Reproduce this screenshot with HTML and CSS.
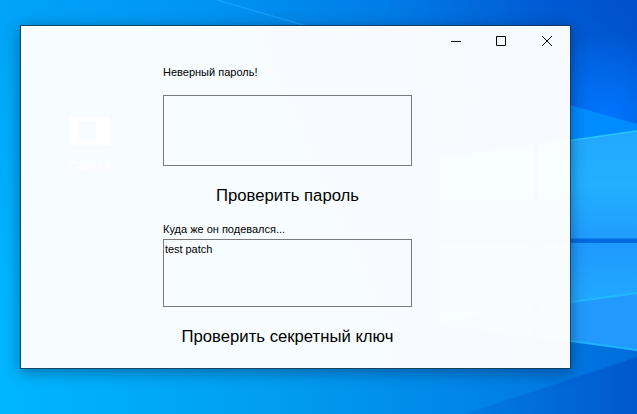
FILE: index.html
```html
<!DOCTYPE html>
<html lang="ru">
<head>
<meta charset="utf-8">
<title>Проверка</title>
<link rel="stylesheet" href="styles.css">
</head>
<body>
<div class="desktop">
  <svg class="wallpaper" viewBox="0 0 637 414" aria-hidden="true">
    <defs>
      <linearGradient id="sky" x1="0" y1="0" x2="1" y2="0">
        <stop offset="0" stop-color="#00a4f8"/>
        <stop offset=".3" stop-color="#0096f3"/>
        <stop offset=".6" stop-color="#007de7"/>
        <stop offset=".85" stop-color="#005bd5"/>
        <stop offset="1" stop-color="#0050cb"/>
      </linearGradient>
      <linearGradient id="floor" x1="0" y1="0" x2="1" y2="0">
        <stop offset="0" stop-color="#00b6ff"/>
        <stop offset=".45" stop-color="#009cf1"/>
        <stop offset=".75" stop-color="#0084e6"/>
        <stop offset="1" stop-color="#006cdd"/>
      </linearGradient>
      <linearGradient id="fade" x1="0" y1="0" x2="0" y2="1">
        <stop offset="0" stop-color="#fff" stop-opacity="0"/>
        <stop offset=".8" stop-color="#fff"/>
      </linearGradient>
      <mask id="lower"><rect width="637" height="414" fill="url(#fade)"/></mask>
      <radialGradient id="glow" gradientUnits="userSpaceOnUse" cx="605" cy="116" r="85">
        <stop offset="0" stop-color="#0075ff"/>
        <stop offset="1" stop-color="#0075ff" stop-opacity="0"/>
      </radialGradient>
      <linearGradient id="upper-pane" x1="0" y1="0" x2="0" y2="1">
        <stop offset="0" stop-color="#22a8ff"/>
        <stop offset=".5" stop-color="#22b0ff"/>
        <stop offset="1" stop-color="#209cff"/>
      </linearGradient>
      <linearGradient id="lower-pane" x1="0" y1="0" x2="0" y2="1">
        <stop offset="0" stop-color="#2099ff"/>
        <stop offset="1" stop-color="#20adff"/>
      </linearGradient>
      <linearGradient id="corner" x1="0" y1="0" x2="1" y2="0">
        <stop offset="0" stop-color="#007de4"/>
        <stop offset="1" stop-color="#0058cc"/>
      </linearGradient>
    </defs>
    <rect width="637" height="414" fill="url(#sky)"/>
    <rect width="637" height="414" fill="url(#floor)" mask="url(#lower)"/>
    <path d="M217 0L410 56" stroke="#1ca6ff" stroke-opacity=".7" stroke-width="1.5"/>
    <rect x="500" y="25" width="137" height="130" fill="url(#glow)"/>
    <path d="M480 78L570 105L637 124V140L440 170Z" fill="#008cff"/>
    <path d="M440 159L637 131V239H440Z" fill="url(#upper-pane)"/>
    <path d="M440 159L637 131" stroke="#27c8ff" stroke-width="1.5"/>
    <path d="M440 238.500H637V242.500H440Z" fill="#006be0"/>
    <path d="M440 243H637V293L440 319Z" fill="url(#lower-pane)"/>
    <path d="M440 320L637 293V350L440 323Z" fill="#2299fc"/>
    <path d="M440 320L637 293" stroke="#20b9ff" stroke-width="2"/>
    <path d="M440 323L637 350" stroke="#20b4ff" stroke-width="2"/>
    <path d="M465 414L637 357V414Z" fill="url(#corner)"/>
    <path d="M536 145V337" stroke="#0075e3" stroke-width="4"/>
  </svg>
  <div class="shortcut">
    <svg class="shortcut-icon" viewBox="0 0 41 29" aria-hidden="true">
      <path fill="#fff" fill-rule="evenodd" d="M0 1H40V29H0ZM9 5V26H26V5Z"/>
      <path d="M2 7H7M2 10H7M2 13H7M28 7H38M28 10H38M28 13H38M28 16H38M28 19H34" stroke="#dce9f2"/>
    </svg>
    <span class="shortcut-name">capture</span>
  </div>

  <main class="window">
    <header class="titlebar">
      <button class="control" aria-label="Свернуть"><svg viewBox="0 0 10 10"><path d="M0 5.5H10"/></svg></button>
      <button class="control" aria-label="Развернуть"><svg viewBox="0 0 10 10"><path d="M.5 .5H9.5V9.5H.5Z"/></svg></button>
      <button class="control" aria-label="Закрыть"><svg viewBox="0 0 10 10"><path d="M0 0L10 10M10 0L0 10"/></svg></button>
    </header>
    <form class="form">
      <label class="label label-password" for="password">Неверный пароль!</label>
      <textarea class="field field-password" id="password"></textarea>
      <button class="action action-password" type="button">Проверить пароль</button>
      <label class="label label-key" for="key">Куда же он подевался...</label>
      <textarea class="field field-key" id="key">test patch</textarea>
      <button class="action action-key" type="button">Проверить секретный ключ</button>
    </form>
  </main>
</div>
</body>
</html>
```
FILE: styles.css
```css
* {
  box-sizing: border-box;
}

body {
  margin: 0;
  overflow: hidden;
  font-family: "Liberation Sans", Arial, sans-serif;
  color: #000;
}

.desktop {
  position: relative;
  width: 637px;
  height: 414px;
  padding: 25px 0 0 20px;
  overflow: hidden;
}

.wallpaper {
  position: absolute;
  inset: 0;
  width: 637px;
  height: 414px;
}

.shortcut {
  position: absolute;
  left: 60px;
  top: 116px;
  width: 61px;
  display: flex;
  flex-direction: column;
  align-items: center;
  gap: 13px;
}

.shortcut-icon {
  width: 41px;
  height: 29px;
}

.shortcut-name {
  font: 12px/16px "Open Sans", sans-serif;
  letter-spacing: -0.2px;
  color: #fff;
  text-shadow: 1px 1px 2px #000;
}

.window {
  position: relative;
  width: 551px;
  height: 344px;
  border: 1px solid rgba(20, 50, 65, 0.8);
  background: rgba(255, 255, 255, 0.967);
  background-clip: padding-box;
  box-shadow: 0 3px 14px rgba(0, 20, 50, 0.42);
}

.titlebar {
  display: flex;
  justify-content: flex-end;
  height: 29px;
}

.control {
  display: grid;
  place-items: center;
  width: 45px;
  height: 29px;
  padding: 0;
  border: 0;
  background: none;
}

.control:last-child {
  width: 47px;
}

.control svg {
  width: 10px;
  height: 10px;
  fill: none;
  stroke: #000;
}

.form {
  display: flex;
  flex-direction: column;
  width: 249px;
  margin: 9px 0 0 142px;
}

.label {
  height: 16px;
  font-size: 11px;
  line-height: 16px;
  white-space: nowrap;
}

.field {
  display: block;
  width: 249px;
  padding: 2px 1px;
  border: 1px solid #7a7a7a;
  background: transparent;
  color: #000;
  font: 11px/15px "Liberation Sans", Arial, sans-serif;
  letter-spacing: -0.05px;
  resize: none;
}

.field-password {
  height: 71px;
  margin-top: 15px;
}

.field-key {
  height: 68px;
  margin-top: 2px;
}

.action {
  align-self: center;
  height: 24px;
  padding: 0;
  border: 0;
  background: none;
  color: #000;
  font: 16.7px/24px "Liberation Sans", Arial, sans-serif;
  white-space: nowrap;
}

.action-password {
  margin-top: 18px;
}

.label-key {
  margin-top: 13px;
}

.action-key {
  margin-top: 18px;
}
```
